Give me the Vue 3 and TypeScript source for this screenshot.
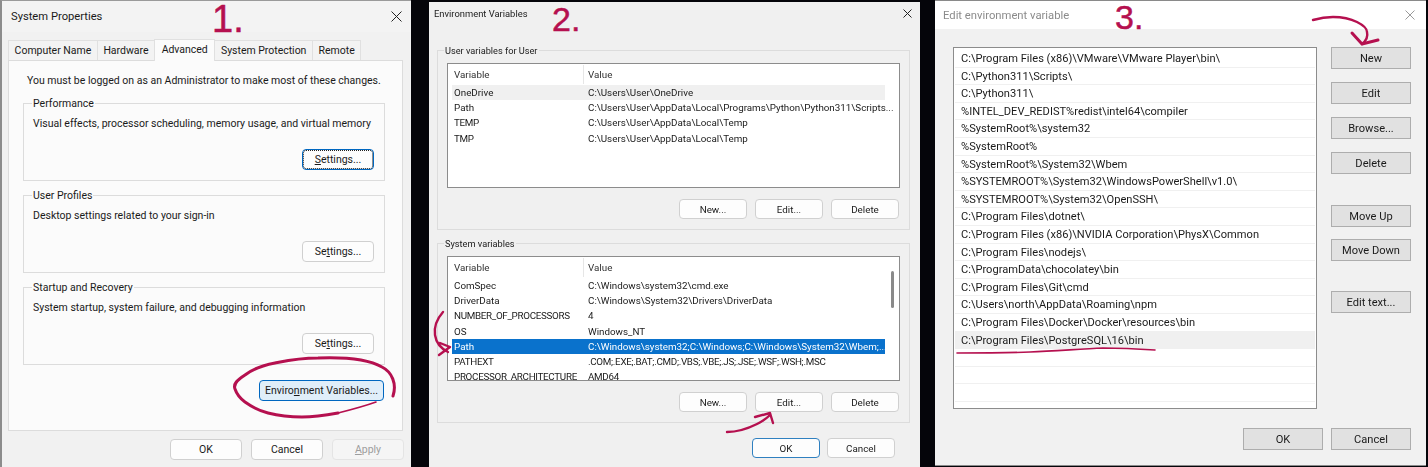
<template>
  <div class="desktop">
    <!-- step 1 -->
    <section class="win win-system">
      <header class="titlebar">
        <span>System Properties</span>
        <svg class="close" viewBox="0 0 11 11"><path d="M.5.5l10 10M10.5.5l-10 10" /></svg>
      </header>
      <nav class="tabs">
        <span v-for="tab in tabs" :key="tab" class="tab" :class="{ active: tab === 'Advanced' }">{{ tab }}</span>
      </nav>
      <div class="panel">
        <p class="notice">You must be logged on as an Administrator to make most of these changes.</p>
        <div v-for="box in settingsBoxes" :key="box.label" class="group settings-group">
          <span class="legend">{{ box.label }}</span>
          <p class="group-desc">{{ box.desc }}</p>
          <button class="btn settings-btn" :class="{ dotted: box.focused }">
            <template v-if="box.focused"><u>S</u>ettings...</template>
            <template v-else>Se<u>t</u>tings...</template>
          </button>
        </div>
        <button class="btn env-btn">Enviro<u>n</u>ment Variables...</button>
      </div>
      <footer class="win-footer">
        <button class="btn">OK</button>
        <button class="btn">Cancel</button>
        <button class="btn disabled"><u>A</u>pply</button>
      </footer>
    </section>

    <!-- step 2 -->
    <section class="win win-env">
      <header class="titlebar">
        <span>Environment Variables</span>
        <svg class="close" viewBox="0 0 9 9"><path d="M.5.5l8 8M8.5.5l-8 8" /></svg>
      </header>
      <div v-for="(block, i) in envBlocks" :key="block.label" class="group env-group" :class="{ second: i === 1 }">
        <span class="legend">{{ block.label }}</span>
        <div class="env-list">
          <div class="env-head">
            <span class="col-var">Variable</span>
            <span class="col-val">Value</span>
          </div>
          <div
            v-for="row in block.rows"
            :key="row[0]"
            class="env-row"
            :class="{ hover: row[0] === block.hover, selected: row[0] === block.selected }"
          >
            <span class="col-var" :class="{ caps: isCaps(row[0]) }">{{ row[0] }}</span>
            <span class="col-val" :class="{ caps: isCaps(row[1]) }">{{ row[1] }}</span>
          </div>
          <i v-if="i === 1" class="thumb"></i>
        </div>
        <div class="env-actions">
          <button class="btn">New...</button>
          <button class="btn">Edit...</button>
          <button class="btn">Delete</button>
        </div>
      </div>
      <footer class="env-footer">
        <button class="btn default">OK</button>
        <button class="btn">Cancel</button>
      </footer>
    </section>

    <!-- step 3 -->
    <section class="win win-edit">
      <header class="titlebar">
        <span>Edit environment variable</span>
        <svg class="close" viewBox="0 0 10 10"><path d="M.5.5l9 9M9.5.5l-9 9" /></svg>
      </header>
      <div class="edit-body">
        <ul class="path-list">
          <li v-for="(p, i) in paths" :key="i" :class="{ hover: p.includes('PostgreSQL') }">{{ p }}</li>
        </ul>
        <div class="edit-actions">
          <button
            v-for="b in editButtons"
            :key="b.label"
            class="btn flat"
            :class="b.cls"
          >{{ b.label }}</button>
        </div>
      </div>
      <footer class="edit-footer">
        <button class="btn flat">OK</button>
        <button class="btn flat">Cancel</button>
      </footer>
    </section>

    <!-- pen marks on top of the screenshots -->
    <span class="step step-1">1.</span>
    <span class="step step-2">2.</span>
    <span class="step step-3">3.</span>
    <svg class="ink" viewBox="0 0 1428 467">
      <path class="bold" d="M393 396C397 384 392 372 382 367C368 359 345 357 318 358C298 358 285 361 275 363C260 366 250 371 245 375C237 380 233 384 235 389C237 395 241 399 245 402C252 407 260 411 268 413C280 416 290 417 302 417C315 417 327 415 338 413" />
      <path class="thin" d="M338 413C350 410 362 407 376 402" />
      <path d="M443 312C436 320 434 328 435 335C436 342 440 348 448 352M440 343L450 347L439 355" />
      <path d="M727 432C738 432 749 428 757 424C763 421 767 418 770 415M755 417L770 413L773 423" />
      <path d="M1313 20C1320 18 1326 17 1333 17C1343 17 1351 19 1357 22C1363 25 1367 28 1367 32C1368 36 1367 40 1362 44" />
      <path class="bold" d="M1352 33L1362 44L1378 40" />
      <path class="thin" d="M957 353C980 353 1005 353 1030 352C1055 351 1080 349 1103 348C1122 348 1140 349 1155 350" />
    </svg>
  </div>
</template>

<script setup lang="ts">
interface SettingsBox {
  label: string
  desc: string
  focused?: boolean
}

interface EnvBlock {
  label: string
  rows: [string, string][]
  hover?: string
  selected?: string
}

const tabs = ['Computer Name', 'Hardware', 'Advanced', 'System Protection', 'Remote']

const settingsBoxes: SettingsBox[] = [
  { label: 'Performance', desc: 'Visual effects, processor scheduling, memory usage, and virtual memory', focused: true },
  { label: 'User Profiles', desc: 'Desktop settings related to your sign-in' },
  { label: 'Startup and Recovery', desc: 'System startup, system failure, and debugging information' }
]

const envBlocks: EnvBlock[] = [
  {
    label: 'User variables for User',
    hover: 'OneDrive',
    rows: [
      ['OneDrive', 'C:\\Users\\User\\OneDrive'],
      ['Path', 'C:\\Users\\User\\AppData\\Local\\Programs\\Python\\Python311\\Scripts...'],
      ['TEMP', 'C:\\Users\\User\\AppData\\Local\\Temp'],
      ['TMP', 'C:\\Users\\User\\AppData\\Local\\Temp']
    ]
  },
  {
    label: 'System variables',
    selected: 'Path',
    rows: [
      ['ComSpec', 'C:\\Windows\\system32\\cmd.exe'],
      ['DriverData', 'C:\\Windows\\System32\\Drivers\\DriverData'],
      ['NUMBER_OF_PROCESSORS', '4'],
      ['OS', 'Windows_NT'],
      ['Path', 'C:\\Windows\\system32;C:\\Windows;C:\\Windows\\System32\\Wbem;...'],
      ['PATHEXT', '.COM;.EXE;.BAT;.CMD;.VBS;.VBE;.JS;.JSE;.WSF;.WSH;.MSC'],
      ['PROCESSOR_ARCHITECTURE', 'AMD64']
    ]
  }
]

const paths = [
  'C:\\Program Files (x86)\\VMware\\VMware Player\\bin\\',
  'C:\\Python311\\Scripts\\',
  'C:\\Python311\\',
  '%INTEL_DEV_REDIST%redist\\intel64\\compiler',
  '%SystemRoot%\\system32',
  '%SystemRoot%',
  '%SystemRoot%\\System32\\Wbem',
  '%SYSTEMROOT%\\System32\\WindowsPowerShell\\v1.0\\',
  '%SYSTEMROOT%\\System32\\OpenSSH\\',
  'C:\\Program Files\\dotnet\\',
  'C:\\Program Files (x86)\\NVIDIA Corporation\\PhysX\\Common',
  'C:\\Program Files\\nodejs\\',
  'C:\\ProgramData\\chocolatey\\bin',
  'C:\\Program Files\\Git\\cmd',
  'C:\\Users\\north\\AppData\\Roaming\\npm',
  'C:\\Program Files\\Docker\\Docker\\resources\\bin',
  'C:\\Program Files\\PostgreSQL\\16\\bin',
  '',
  '',
  ''
]

const editButtons = [
  { label: 'New' },
  { label: 'Edit' },
  { label: 'Browse...' },
  { label: 'Delete' },
  { label: 'Move Up', cls: 'move-up' },
  { label: 'Move Down', cls: 'move-down' },
  { label: 'Edit text...', cls: 'edit-text' }
]

// all-caps names are noticeably wider in Roboto than in the original font
const isCaps = (s: string) => s.length > 2 && s === s.toUpperCase()
</script>

<style>
html,
body {
  margin: 0;
  background: #000;
}
</style>

<style scoped>
.desktop {
  position: relative;
  width: 1428px;
  height: 467px;
  overflow: hidden;
  background: #05050a;
  font-family: Roboto, "Liberation Sans", sans-serif;
  color: #1a1a1a;
}

.win {
  position: absolute;
  display: flex;
  flex-direction: column;
  box-sizing: border-box;
  background: #f1f1f1;
}

.win-system {
  left: 0;
  top: 0;
  width: 411px;
  height: 467px;
  border-left: 2px solid #8c8c8c;
  border-top: 1px solid #9a9a9a;
  font-size: 10.5px;
}

.win-env {
  left: 429px;
  top: 2px;
  width: 491px;
  height: 465px;
  padding: 0 10px 0 8px;
  background: #f0f0f0;
  filter: blur(0.3px);
  font-size: 9.8px;
}

.win-edit {
  left: 935px;
  top: 0;
  width: 491px;
  height: 466px;
  border-top: 1px solid #8a8a8a;
  border-bottom: 1px solid #8a8a8a;
  filter: blur(0.3px);
  font-size: 11.1px;
}

.titlebar {
  display: flex;
  align-items: center;
  justify-content: space-between;
  flex: none;
}

.close {
  width: 11px;
  height: 11px;
  fill: none;
  stroke: #222;
  stroke-width: 1;
}

.win-system .titlebar {
  height: 31px;
  padding: 0 9px;
  font-size: 11.2px;
  background: #f3f3f3;
}

.win-env .titlebar {
  height: 22px;
  margin-left: -3px;
  margin-right: -2px;
  margin-bottom: 26px;
  font-size: 9.4px;
}

.win-env .close {
  width: 9px;
  height: 9px;
}

.win-edit .titlebar {
  height: 28px;
  padding: 0 11px 0 8px;
  background: #fff;
  color: #8b8b8b;
  font-size: 11.25px;
}

.win-edit .close {
  width: 10px;
  height: 10px;
  stroke: #9a9a9a;
}

.tabs {
  display: flex;
  align-items: flex-end;
  flex: none;
  height: 28px;
  padding-left: 6px;
}

.tab {
  display: flex;
  align-items: center;
  height: 20px;
  padding: 0 5.6px;
  box-sizing: border-box;
  background: #f3f3f3;
  border: 1px solid #e0e0e0;
  border-bottom: 0;
  margin-right: -1px;
  letter-spacing: -0.02px;
}

.tab.active {
  position: relative;
  z-index: 1;
  height: 22px;
  padding: 0 6.6px 3px;
  background: #fbfbfb;
  margin-bottom: -1px;
}

.panel {
  display: flex;
  flex-direction: column;
  height: 371px;
  box-sizing: border-box;
  margin: 0 8px 0 6px;
  padding: 12px 18px 0 14px;
  background: #fbfbfb;
  border: 1px solid #dcdcdc;
}

.notice {
  margin: 0 0 14px 4px;
  line-height: 16px;
  white-space: nowrap;
}

.group {
  display: flex;
  flex-direction: column;
  box-sizing: border-box;
  border: 1px solid #dcdcdc;
}

.legend {
  align-self: flex-start;
  height: 16px;
  line-height: 16px;
  margin: -8px 0 0 8px;
  padding: 0 1px;
  background: #fbfbfb;
}

.settings-group {
  width: 362px;
  height: 78px;
  margin-bottom: 14px;
  padding-bottom: 10px;
}

.group-desc {
  margin: 4px 0 0 9px;
  line-height: 16px;
  white-space: nowrap;
}

.btn {
  flex: none;
  box-sizing: border-box;
  width: 72px;
  height: 21px;
  padding: 1px 0 0;
  background: #fdfdfd;
  border: 1px solid #d0d0d0;
  border-radius: 4px;
  color: inherit;
  font: inherit;
  line-height: 1;
  white-space: nowrap;
}

.settings-btn {
  align-self: flex-end;
  margin: auto 10px 0 0;
}

.settings-btn.dotted {
  border: 1px solid #0067c0;
  outline: 1px dotted #222;
  outline-offset: -2px;
}

.env-btn {
  align-self: flex-end;
  width: 125px;
  height: 21px;
  margin-top: 1px;
  background: #e0eef9;
  border-color: #0067c0;
}

.win-footer {
  display: flex;
  justify-content: flex-end;
  gap: 9px;
  padding: 8px 7px 0 0;
}

.disabled {
  color: #9d9d9d;
  background: #f5f5f5;
  border-color: #e4e4e4;
}

.env-group {
  height: 180px;
  padding: 0 9px;
}

.env-group.second {
  margin-top: 13px;
}

.env-group .legend {
  margin-left: -3px;
  background: #f0f0f0;
  font-size: 9.2px;
}

.env-list {
  position: relative;
  flex: none;
  box-sizing: border-box;
  height: 125px;
  margin-top: 4px;
  padding: 1px 14px 0 4px;
  overflow: hidden;
  background: #fff;
  border: 1px solid #8c8c8c;
}

.env-head,
.env-row {
  display: flex;
  align-items: center;
}

.env-head {
  height: 19px;
  margin-bottom: 1px;
  color: #333;
}

.env-row {
  height: 15.2px;
  white-space: nowrap;
}

.col-var {
  flex: none;
  box-sizing: border-box;
  width: 131px;
  padding-left: 2px;
}

.caps {
  letter-spacing: -0.3px;
}

.env-head .col-val {
  align-self: stretch;
  display: flex;
  align-items: center;
  border-left: 1px solid #e6e6e6;
  padding-left: 4px;
}

.env-row .col-val {
  padding-left: 5px;
}

.env-row.hover {
  background: #f0f0f0;
}

.env-row.selected {
  background: #0a72cc;
  color: #fff;
}

.thumb {
  position: absolute;
  top: 14px;
  right: 5px;
  width: 3px;
  height: 37px;
  background: #8a8a8a;
  border-radius: 2px;
}

.env-actions {
  display: flex;
  justify-content: flex-end;
  gap: 8px;
  margin-top: 11px;
  padding-right: 1px;
}

.env-actions .btn,
.env-footer .btn {
  width: 68px;
  height: 20px;
}

.env-footer {
  display: flex;
  justify-content: flex-end;
  gap: 7px;
  margin-top: 15px;
  padding-right: 15px;
}

.env-footer .default {
  border-color: #2f80c0;
  border-width: 1.5px;
}

.edit-body {
  display: flex;
  gap: 14px;
  margin-top: 18px;
  padding-left: 18px;
}

.path-list {
  flex: none;
  box-sizing: border-box;
  width: 364px;
  height: 362px;
  margin: 0;
  padding: 2px 1px 0;
  overflow: hidden;
  list-style: none;
  background: #fff;
  border: 1px solid #8c8c8c;
}

.path-list li {
  box-sizing: border-box;
  height: 17.6px;
  padding-left: 6px;
  line-height: 17px;
  border-bottom: 1px solid #f0f0f0;
  white-space: nowrap;
}

.path-list li.hover {
  background: #f0f0f0;
}

.edit-actions {
  display: flex;
  flex-direction: column;
  gap: 13px;
}

.flat {
  width: 80px;
  height: 22px;
  background: #e1e1e1;
  border: 1px solid #adadad;
  border-radius: 0;
}

.move-up {
  margin-top: 18px;
}

.move-down {
  margin-top: -1px;
}

.edit-text {
  margin-top: 17px;
}

.edit-footer {
  display: flex;
  justify-content: flex-end;
  gap: 8px;
  margin-top: 19px;
  padding-right: 15px;
}

.step {
  position: absolute;
  top: 0;
  color: #b5104f;
  font-family: "Liberation Sans", sans-serif;
  line-height: 1;
  -webkit-text-stroke: 0.5px #b5104f;
}

.step-1 {
  left: 212px;
  font-size: 38px;
}

.step-2 {
  left: 552px;
  top: 2px;
  font-size: 34px;
}

.step-3 {
  left: 1115px;
  font-size: 34px;
}

.ink {
  position: absolute;
  inset: 0;
  width: 1428px;
  height: 467px;
  fill: none;
  stroke: #b5104f;
  stroke-width: 2.4;
  stroke-linecap: round;
  stroke-linejoin: round;
  pointer-events: none;
}

.ink .bold {
  stroke-width: 3;
}

.ink .thin {
  stroke-width: 1.6;
}
</style>
